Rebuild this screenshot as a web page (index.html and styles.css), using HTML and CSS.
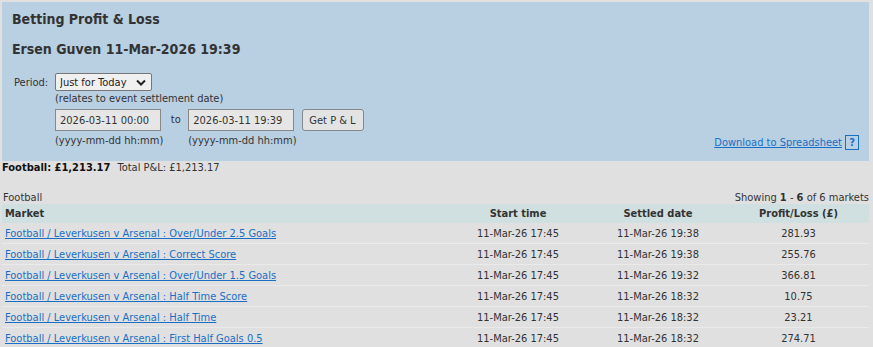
FILE: index.html
```html
<!DOCTYPE html>
<html lang="en">
<head>
<meta charset="UTF-8">
<title>Betting Profit &amp; Loss</title>
<link rel="stylesheet" href="styles.css">
</head>
<body>

<div class="panel">
    <h1>Betting Profit &amp; Loss</h1>
    <h2>Ersen Guven 11-Mar-2026 19:39</h2>

    <div class="period">
        <span class="label">Period:</span>
        <div class="period-body">
            <div class="select-wrap">
                <select class="period-select">
                    <option>Just for Today</option>
                </select>
                <svg class="chevron" width="10" height="7" viewBox="0 0 10 7"><path d="M1 1.5 L5 5.5 L9 1.5" fill="none" stroke="#222" stroke-width="2"/></svg>
            </div>
            <div class="note">(relates to event settlement date)</div>
            <div class="dates">
                <div class="date-field">
                    <input type="text" value="2026-03-11 00:00">
                    <span class="hint">(yyyy-mm-dd hh:mm)</span>
                </div>
                <span class="to">to</span>
                <div class="date-field">
                    <input type="text" value="2026-03-11 19:39">
                    <span class="hint">(yyyy-mm-dd hh:mm)</span>
                </div>
                <button class="get-btn">Get P &amp; L</button>
                <div class="download">
                    <a href="#">Download to Spreadsheet</a>
                    <span class="help">?</span>
                </div>
            </div>
        </div>
    </div>
</div>

<div class="summary">
    <b>Football: £1,213.17</b>
    <span class="total">Total P&amp;L: £1,213.17</span>
</div>

<div class="list-head">
    <span>Football</span>
    <span>Showing <b>1</b> - <b>6</b> of 6 markets</span>
</div>

<table class="markets">
    <thead>
        <tr>
            <th class="market">Market</th>
            <th>Start time</th>
            <th>Settled date</th>
            <th>Profit/Loss (£)</th>
        </tr>
    </thead>
    <tbody>
        <tr>
            <td class="market"><a href="#">Football / Leverkusen v Arsenal : Over/Under 2.5 Goals</a></td>
            <td>11-Mar-26 17:45</td>
            <td>11-Mar-26 19:38</td>
            <td>281.93</td>
        </tr>
        <tr>
            <td class="market"><a href="#">Football / Leverkusen v Arsenal : Correct Score</a></td>
            <td>11-Mar-26 17:45</td>
            <td>11-Mar-26 19:38</td>
            <td>255.76</td>
        </tr>
        <tr>
            <td class="market"><a href="#">Football / Leverkusen v Arsenal : Over/Under 1.5 Goals</a></td>
            <td>11-Mar-26 17:45</td>
            <td>11-Mar-26 19:32</td>
            <td>366.81</td>
        </tr>
        <tr>
            <td class="market"><a href="#">Football / Leverkusen v Arsenal : Half Time Score</a></td>
            <td>11-Mar-26 17:45</td>
            <td>11-Mar-26 18:32</td>
            <td>10.75</td>
        </tr>
        <tr>
            <td class="market"><a href="#">Football / Leverkusen v Arsenal : Half Time</a></td>
            <td>11-Mar-26 17:45</td>
            <td>11-Mar-26 18:32</td>
            <td>23.21</td>
        </tr>
        <tr>
            <td class="market"><a href="#">Football / Leverkusen v Arsenal : First Half Goals 0.5</a></td>
            <td>11-Mar-26 17:45</td>
            <td>11-Mar-26 18:32</td>
            <td>274.71</td>
        </tr>
    </tbody>
</table>

</body>
</html>
```

FILE: styles.css
```css
body {
    margin: 0;
    padding: 2px 4px 0 2px;
    background: #e0e0e0;
    color: #333;
    font-family: "DejaVu Sans Condensed", "DejaVu Sans", sans-serif;
    font-size: 11px;
}
.panel {
    background: #b9cfe2;
    padding: 9px 10px 11px 10px;
}
h1, h2 {
    margin: 0;
    font-size: 14px;
    font-weight: bold;
    color: #333;
}
h1 {
    margin-bottom: 14px;
}
h2 {
    margin-bottom: 16px;
}
.period {
    display: flex;
    padding-left: 2px;
}
.period .label {
    width: 41px;
    padding-top: 3px;
}
.period-body {
    flex: 1;
}
.select-wrap {
    position: relative;
    width: 97px;
}
.period-select {
    appearance: none;
    width: 97px;
    height: 18px;
    padding: 0 4px;
    border: 1px solid #777;
    border-radius: 2px;
    background: #f0f0f0;
    font-family: inherit;
    font-size: 11px;
    color: #222;
}
.chevron {
    position: absolute;
    right: 6px;
    top: 6px;
    pointer-events: none;
}
.note {
    margin-top: 1px;
}
.dates {
    display: flex;
    align-items: flex-start;
    margin-top: 4px;
}
.date-field {
    display: flex;
    flex-direction: column;
}
.date-field input {
    width: 106px;
    height: 22px;
    box-sizing: border-box;
    padding: 0 4px;
    border: 1px solid #888;
    background: #e6e6e6;
    font-family: inherit;
    font-size: 11px;
    color: #333;
}
.hint {
    margin-top: 3px;
}
.to {
    width: 25px;
    padding-top: 4px;
    text-align: center;
}
.get-btn {
    margin-left: 5px;
    height: 22px;
    width: 62px;
    border: 1px solid #888;
    border-radius: 3px;
    background: #e3e3e3;
    font-family: inherit;
    font-size: 11px;
    color: #333;
}
.download {
    margin-left: auto;
    margin-top: 26px;
    display: flex;
    align-items: center;
    gap: 3px;
}
a {
    color: #1a6fc4;
}
.help {
    display: inline-block;
    width: 12px;
    height: 13px;
    line-height: 13px;
    border: 1px solid #1a6fc4;
    text-align: center;
    color: #1a6fc4;
    font-weight: bold;
}
.summary {
    padding: 0;
    height: 20px;
}
.summary b {
    font-size: 11px;
    color: #111;
}
.total {
    margin-left: 4px;
}
.list-head {
    display: flex;
    justify-content: space-between;
    padding: 10px 0 0 1px;
}
.markets {
    width: 100%;
    border-collapse: collapse;
}
.markets th {
    background: #d0e0e0;
    height: 19px;
    padding: 0;
    font-size: 11px;
    text-align: center;
}
.markets td {
    height: 20px;
    padding: 0;
    text-align: center;
    border-bottom: 1px solid #eaeaea;
}
.markets th.market, .markets td.market {
    text-align: left;
    padding-left: 3px;
}
.markets th:nth-child(2), .markets th:nth-child(3) {
    width: 140px;
}
.markets th:nth-child(4) {
    width: 141px;
}
```
